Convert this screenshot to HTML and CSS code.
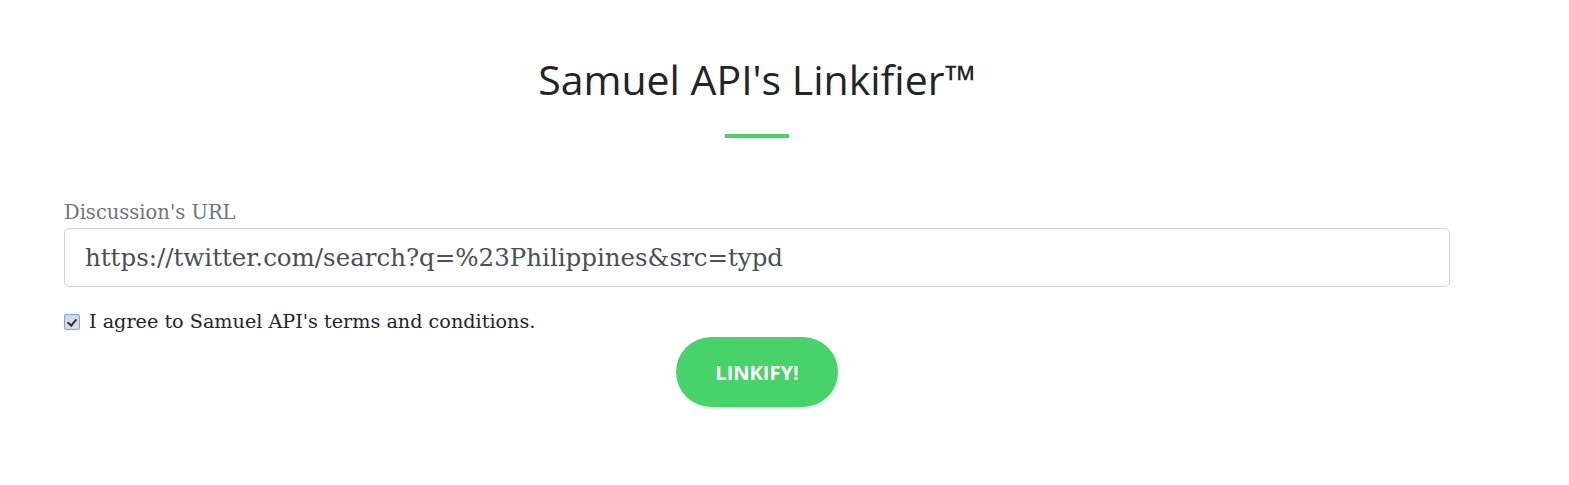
FILE: index.html
```html
<!DOCTYPE html>
<html>
<head>
<meta charset="utf-8">
<link rel="stylesheet" href="styles.css">
</head>
<body>
<main class="wrap">
  <h1 class="title">Samuel API's Linkifier™</h1>
  <div class="rule"></div>
  <form class="form">
    <label class="label" for="url">Discussion's URL</label>
    <input class="input" id="url" type="text" value="https://twitter.com/search?q=%23Philippines&amp;src=typd">
    <label class="check"><input class="box" type="checkbox" checked> I agree to Samuel API's terms and conditions.</label>
    <div class="actions"><button class="btn" type="button">LINKIFY!</button></div>
  </form>
</main>
</body>
</html>
```
FILE: styles.css
```css
html, body { margin: 0; padding: 0; background: #fff; }
body { font-family: "DejaVu Serif", serif; color: #212529; }
.wrap { width: 1386px; margin-left: 64px; padding-top: 51px; }
.title { font-family: "Open Sans", sans-serif; font-weight: 400; font-size: 41px; line-height: 56px; margin: 0; text-align: center; color: #212529; }
.rule { width: 64px; height: 4px; background: #48d26a; margin: 27px auto 0; }
.form { margin-top: 62px; display: flex; flex-direction: column; }
.label { font-size: 19.5px; color: #6c757d; line-height: 25px; }
.input { margin-top: 3px; height: 59px; box-sizing: border-box; border: 1px solid #ced4da; border-radius: 5px; padding: 0 20px; font-family: "DejaVu Serif", serif; font-size: 24.5px; color: #495057; outline: none; }
.check { margin-top: 22px; display: flex; align-items: center; font-size: 19.2px; color: #212529; line-height: 26px; }
.box { appearance: none; -webkit-appearance: none; margin: 0 9px 0 0; width: 16px; height: 16px; box-sizing: border-box; border: 1px solid #7aa7ea; border-radius: 2px; background: #dcdcdc; position: relative; box-shadow: inset 0 0 0 1px #c8d8f0; }
.box::after { content: ""; position: absolute; left: 4px; top: 2px; width: 4px; height: 7px; border: solid #333; border-width: 0 2px 2px 0; transform: rotate(40deg); }
.actions { display: flex; justify-content: center; margin-top: 2px; }
.btn { width: 162px; height: 70px; border: none; border-radius: 35px; background: #48d26a; color: #fff; font-family: "Open Sans", sans-serif; font-weight: 700; font-size: 20px; cursor: pointer; }
```
